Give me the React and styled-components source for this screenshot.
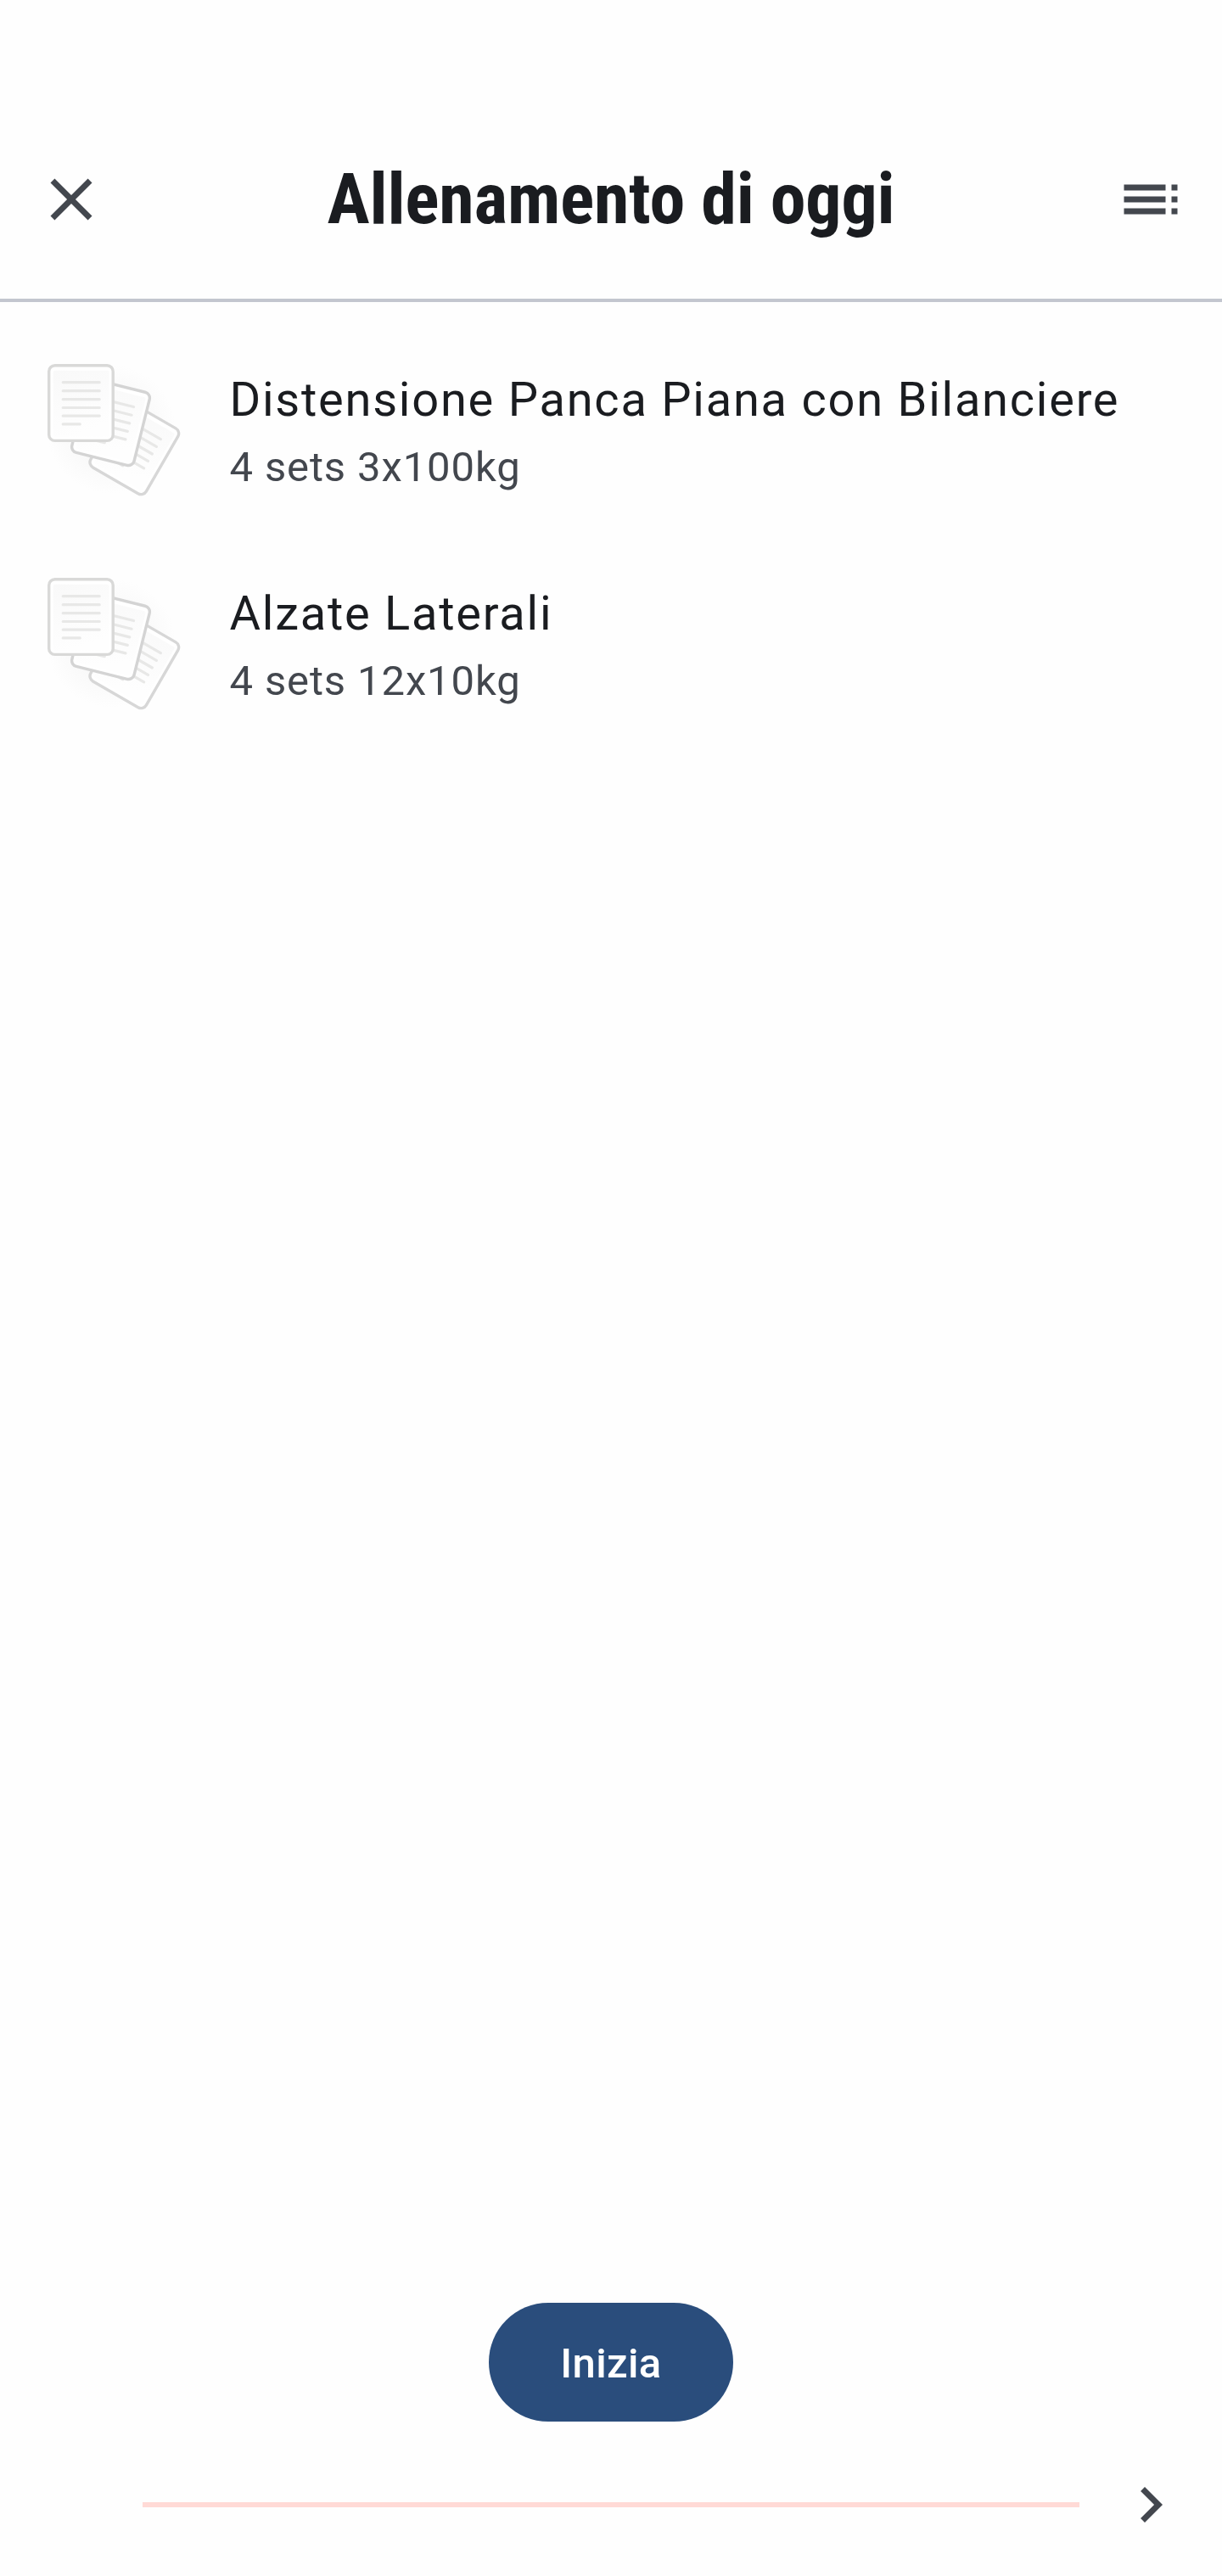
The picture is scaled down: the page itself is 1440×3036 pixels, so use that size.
import React from 'react'
import styled, { createGlobalStyle } from 'styled-components'

const GlobalStyle = createGlobalStyle`
  body {
    margin: 0;
    background: #fefefe;
    font-family: Roboto, sans-serif;
  }
`

const Page = styled.div`
  display: flex;
  flex-direction: column;
  box-sizing: border-box;
  width: 1440px;
  height: 3036px;
  padding-top: 118px;
`

const Header = styled.header`
  display: flex;
  align-items: center;
  justify-content: space-between;
  box-sizing: border-box;
  height: 238px;
  border-bottom: 4px solid #c3c6cf;
`

const IconButton = styled.button`
  display: flex;
  align-items: center;
  justify-content: center;
  width: 168px;
  height: 168px;
  padding: 0;
  border: none;
  background: none;
  color: #43474e;
`

const Title = styled.h1`
  margin: 0;
  font-family: 'Roboto Condensed', Roboto, sans-serif;
  font-size: 84px;
  font-weight: 700;
  font-stretch: 75%;
  line-height: 112px;
  letter-spacing: -0.2px;
  white-space: nowrap;
  color: #1a1c20;
`

const List = styled.ul`
  flex: 1;
  margin: 0;
  padding: 24px 0 0;
  list-style: none;
`

const ListItem = styled.li`
  display: flex;
  align-items: flex-start;
  gap: 55.5px;
  box-sizing: border-box;
  height: 252px;
  padding: 42px 0 0 47px;
`

const ItemText = styled.div`
  padding-top: 7px;
`

const ItemTitle = styled.div`
  font-size: 56px;
  line-height: 84px;
  letter-spacing: 1.75px;
  color: #1a1c20;
`

const ItemDetail = styled.div`
  margin-top: 3px;
  font-size: 49px;
  line-height: 70px;
  letter-spacing: 0.875px;
  color: #43474e;
`

const StartButton = styled.button`
  align-self: center;
  width: 288px;
  height: 140px;
  padding: 2px 0 0;
  border: none;
  border-radius: 70px;
  background: #2a4d7c;
  color: #ffffff;
  font-family: Roboto, sans-serif;
  font-size: 49px;
  font-weight: 500;
  letter-spacing: 0.35px;
`

const Footer = styled.footer`
  display: flex;
  align-items: center;
  height: 168px;
  margin-top: 14px;
  padding-left: 168px;
`

const Progress = styled.div`
  flex: 1;
  height: 6px;
  background: #ffdad6;
`

const icons = {
  close: 'M19 6.41L17.59 5 12 10.59 6.41 5 5 6.41 10.59 12 5 17.59 6.41 19 12 13.41 17.59 19 19 17.59 13.41 12z',
  toc: 'M3 9h14V7H3v2zm0 4h14v-2H3v2zm0 4h14v-2H3v2zm16 0h2v-2h-2v2zm0-10v2h2V7h-2zm0 6h2v-2h-2v2z',
  next: 'M8.59 16.59L13.17 12 8.59 7.41 10 6l6 6-6 6-1.41-1.41z'
}

const Icon = ({ name }) => (
  <svg width="84" height="84" viewBox="0 0 24 24" fill="currentColor">
    <path d={icons[name]} />
  </svg>
)

const Sheet = ({ transform, stroke }) => (
  <g transform={transform}>
    <rect width="75.5" height="88.7" rx="7" fill="#ffffff" stroke={stroke} strokeWidth="3.4" />
    <rect x="5" y="6" width="66" height="78" rx="2" fill="url(#paper)" />
    <path
      d="M16.5 20h43M16.5 30h43M16.5 40h43M16.5 49.8h43M16.5 59.5h43M16.5 69.2h20"
      stroke="#e8e8e7"
      strokeWidth="3.2"
      strokeLinecap="round"
    />
  </g>
)

const Papers = () => (
  <svg width="168" height="168" viewBox="0 0 168 168" fill="none">
    <defs>
      <linearGradient id="paper" x1="0" y1="0" x2="0.3" y2="1">
        <stop offset="0" stopColor="#f9f9f9" />
        <stop offset="1" stopColor="#fefefe" />
      </linearGradient>
      <radialGradient id="shade">
        <stop offset="0.5" stopColor="#f8f8f8" />
        <stop offset="1" stopColor="#fefefe" />
      </radialGradient>
    </defs>
    <circle cx="84" cy="84" r="76" fill="url(#shade)" />
    <Sheet transform="translate(100.8 48.6) rotate(30)" stroke="#d7d7d7" />
    <Sheet transform="translate(57.6 23.7) rotate(14)" stroke="#d4d4d4" />
    <Sheet transform="translate(10.7 8.7)" stroke="#d9d9d8" />
  </svg>
)

const exercises = [
  { name: 'Distensione Panca Piana con Bilanciere', detail: '4 sets 3x100kg' },
  { name: 'Alzate Laterali', detail: '4 sets 12x10kg' }
]

const App = () => {
  return (
    <Page>
      <GlobalStyle />
      <Header>
        <IconButton aria-label="Chiudi">
          <Icon name="close" />
        </IconButton>
        <Title>Allenamento di oggi</Title>
        <IconButton aria-label="Indice">
          <Icon name="toc" />
        </IconButton>
      </Header>
      <List>
        {exercises.map(exercise =>
          <ListItem key={exercise.name}>
            <Papers />
            <ItemText>
              <ItemTitle>{exercise.name}</ItemTitle>
              <ItemDetail>{exercise.detail}</ItemDetail>
            </ItemText>
          </ListItem>
        )}
      </List>
      <StartButton>Inizia</StartButton>
      <Footer>
        <Progress />
        <IconButton aria-label="Avanti">
          <Icon name="next" />
        </IconButton>
      </Footer>
    </Page>
  )
}

export default App
